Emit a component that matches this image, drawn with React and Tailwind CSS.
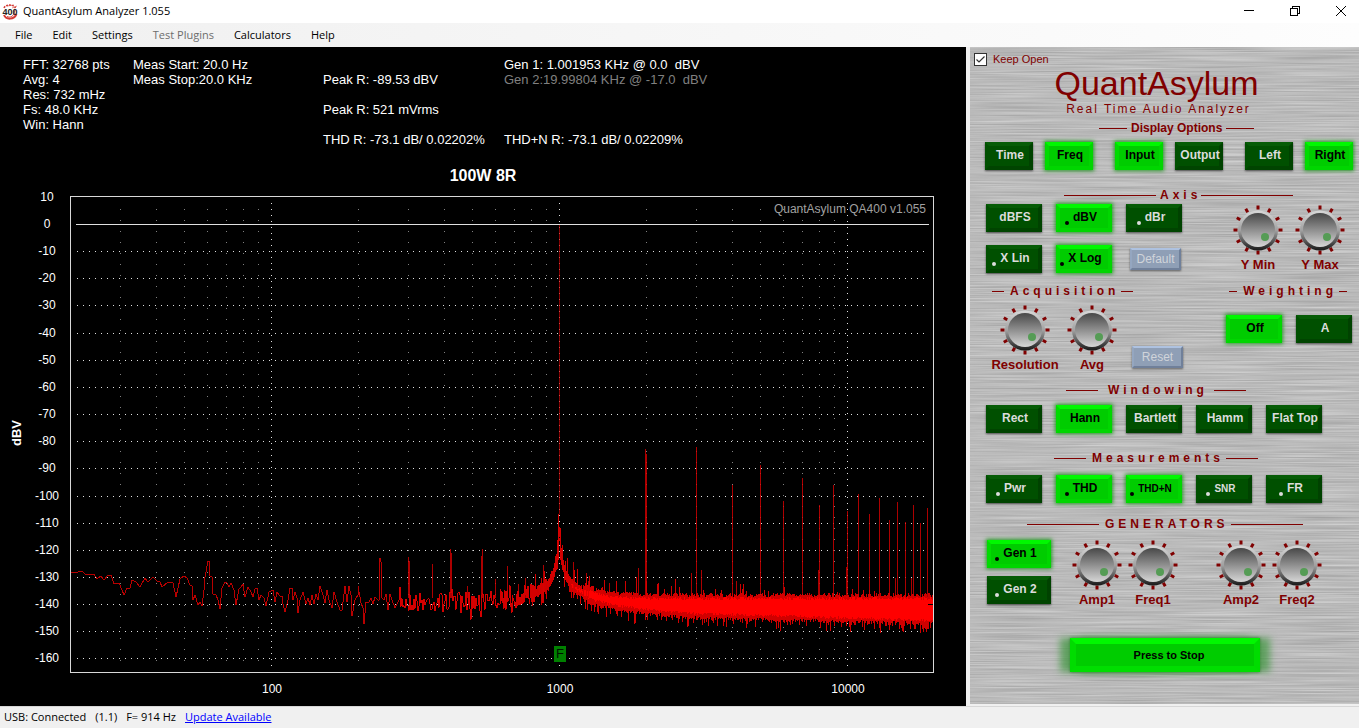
import { useState } from 'react'

const MENU = ['File', 'Edit', 'Settings', 'Test Plugins', 'Calculators', 'Help']

// ---- spectrum plot -------------------------------------------------------

const freqToX = (f) => Math.round(271 + 288 * (Math.log10(f) - 2))
const dbToY = (db) => Math.round(224 - db * 2.715)

const DB_LABELS = Array.from({ length: 18 }, (_, i) => 10 - i * 10)
const MAJOR = [100, 1000, 10000]
const MINOR = [
  30, 40, 50, 60, 70, 80, 90, 200, 300, 400, 500, 600, 700, 800, 900,
  2000, 3000, 4000, 5000, 6000, 7000, 8000, 9000,
]

const LOW_TRACE =
  '71,572 75,573 81,571 83,572 86,575 94,574 97,579 101,576 104,580 108,575 111,575 114,584 119,583 122,590 124,595 127,588 130,588 132,580 136,582 140,587 145,578 148,582 153,577 157,581 160,582 162,587 168,582 173,583 176,597 180,579 184,576 187,578 190,585 192,586 193,600 195,595 198,605 200,602 202,606 204,590 205,577 206,572 208,561 209,561 210,576 212,577 213,594 216,595 218,600 220,609 222,588 225,582 227,583 229,587 231,583 234,590 236,605 239,589 241,587 243,584 245,597 248,587 251,592 253,597 255,589 257,588 259,600 261,595 264,598 266,606 269,592 273,590 275,602 277,592 280,596 282,596 283,604 285,612 288,600 290,588 292,588 293,600 295,592 297,598 298,613 300,600 303,592 306,604 308,598 310,605 312,595 314,604 316,594 318,600 320,586 323,595 325,603 327,590 329,600 332,608 334,592 337,602 340,610 342,610 344,594 345,586 347,602 349,586 351,595 352,616 355,600 358,595 358,586 361,603 363,608 364,624 366,602 369,602 371,598 373,604 375,597 378,600 379,600 380,558 381,562 382,598 384,600 386,594 388,610 390,594 392,600 395,608 397,604 399,600'

// [x, top]
const SPIKES = [
  [408, 557], [409, 561], [432, 564], [450, 549], [451, 553], [467, 586], [482, 549], [481, 556],
  [495, 579], [507, 566], [518, 584], [525, 578], [543, 565], [573, 562], [586, 573], [588, 581],
  [609, 583], [638, 568], [645, 449], [646, 454], [691, 573], [696, 447], [701, 570], [732, 485],
  [736, 581], [760, 465], [783, 501], [802, 478], [818, 570], [819, 505], [833, 485], [846, 567],
  [847, 511], [858, 494], [869, 514], [879, 498], [889, 520], [895, 578], [897, 502], [905, 522],
  [911, 578], [913, 505], [920, 523], [927, 508],
]

function buildNoise() {
  let seed = 7
  const rnd = () => {
    seed = (seed * 16807) % 2147483647
    return seed / 2147483647
  }
  let line = 'M399 600'
  let fringe = ''
  let core = ''
  for (let x = 400; x < 933; x++) {
    const d = Math.abs(x - 559)
    const near = Math.max(0, Math.min(1, (x - 580) / 100))
    const far = Math.max(0, (x - 660) / 273)
    const c = 602 + near * 3 - 26 * Math.exp(-d / 25) - 45 * Math.exp(-d / 3.5)
    if (x < 640) {
      const spread = d < 25 ? 12 : 20
      const steps = x < 500 ? 1 : 2
      for (let k = 0; k < steps; k++) {
        const roll = rnd()
        const jump = roll > 0.93 ? rnd() * 14 : roll < 0.05 ? -rnd() * 12 : 0
        line += `L${x + k * 0.5} ${(c + (rnd() - 0.5) * spread + jump).toFixed(1)}`
      }
    }
    if (x > 530) {
      const h = d < 25 ? 2 : 4 + near * 4
      const rise = rnd() > 0.86 ? rnd() * 16 * (1 - far) : 0
      const dip = rnd() > 0.65 ? rnd() * 10 : 0
      fringe += `M${x}.5 ${Math.round(c - h - rnd() * 4 - rise)}V${Math.round(c + h + 2 + far * 7 + rnd() * 4 + dip)}`
      if (x > 570) {
        core += `M${x}.5 ${Math.round(c - h + rnd() * 3)}V${Math.round(c + h + 1 + far * 8 - rnd() * 3)}`
      }
    }
  }
  return { line, fringe, core }
}

const NOISE = buildNoise()

function Spectrum() {
  return (
    <svg
      viewBox="0 186 966 520"
      className="block h-auto w-full font-['Liberation_Sans',sans-serif]"
      role="img"
      aria-label="Spectrum"
    >
      <g shapeRendering="crispEdges" fill="none">
        {MINOR.map((f) => (
          <path key={f} d={`M${freqToX(f)}.5 209V661`} stroke="#808080" strokeDasharray="1 10" />
        ))}
        {DB_LABELS.slice(2).map((db) => (
          <path key={db} d={`M77 ${dbToY(db)}.5H924`} stroke="#e0e0e0" strokeDasharray="1 5" />
        ))}
        {MAJOR.map((f) => (
          <path key={f} d={`M${freqToX(f)}.5 203V667`} stroke="#e0e0e0" strokeDasharray="1 5" />
        ))}
        <path d="M76 224.5H929" stroke="#e0e0e0" />
        <path d="M70.5 196.5H933.5V672.5H70.5Z" stroke="#d8d8d8" />
      </g>

      <g fill="none" shapeRendering="crispEdges">
        <polyline points={LOW_TRACE} stroke="#b80000" />
        <path d={NOISE.fringe} stroke="#d00000" />
        <path d={NOISE.line} stroke="#d40000" />
        <path d={NOISE.core} stroke="#ff0000" />
        <path d={SPIKES.map(([x, y]) => `M${x}.5 ${y}V598`).join('')} stroke="#d80000" strokeOpacity="0.8" />
        <path d="M559.5 225V514" stroke="#c80000" strokeOpacity="0.65" />
        <path d="M558.5 514V560M560.5 528V560" stroke="#d80000" />
        <path d="M928 604.5H933" stroke="#000" />
      </g>

      <rect x="554" y="646" width="12" height="16" fill="#008000" />
      <text x="560" y="658" textAnchor="middle" fontSize="13" fill="#001000">F</text>

      <text x="926" y="213" textAnchor="end" fontSize="12" fill="#a0a0a0">QuantAsylum QA400 v1.055</text>
      <g fontSize="12" fill="#fff" textAnchor="middle">
        {DB_LABELS.map((db) => (
          <text key={db} x="47" y={dbToY(db) + 4}>{db}</text>
        ))}
        {MAJOR.map((f) => (
          <text key={f} x={freqToX(f) + 1} y="693">{f}</text>
        ))}
      </g>
      <text transform="translate(21 433) rotate(-90)" textAnchor="middle" fontSize="13" fontWeight="bold" fill="#fff">
        dBV
      </text>
    </svg>
  )
}

function Readouts() {
  return (
    <div className="flex h-[90px] whitespace-pre pl-[23px] text-[13px] leading-[15px] text-white">
      <div className="w-[110px]">
        <p>FFT: 32768 pts</p>
        <p>Avg: 4</p>
        <p>Res: 732 mHz</p>
        <p>Fs: 48.0 KHz</p>
        <p>Win: Hann</p>
      </div>
      <div className="w-[190px]">
        <p>Meas Start: 20.0 Hz</p>
        <p>Meas Stop:20.0 KHz</p>
      </div>
      <div className="flex w-[181px] flex-col gap-[15px] pt-[15px]">
        <p>Peak R: -89.53 dBV</p>
        <p>Peak R: 521 mVrms</p>
        <p>THD R: -73.1 dB/ 0.02202%</p>
      </div>
      <div className="flex flex-col justify-between">
        <div>
          <p>Gen 1: 1.001953 KHz @ 0.0  dBV</p>
          <p className="text-[#808080]">Gen 2:19.99804 KHz @ -17.0  dBV</p>
        </div>
        <p>THD+N R: -73.1 dB/ 0.02209%</p>
      </div>
    </div>
  )
}

// ---- control panel -------------------------------------------------------

function Heading({ children, line, className = '', tracked = true }) {
  return (
    <h2 className={`flex h-[18px] items-center text-[12px] font-bold whitespace-nowrap text-[#800000] ${className}`}>
      <span className={`h-px bg-[#800000] ${line}`} />
      <span className={tracked ? '-mr-1 tracking-[4px]' : ''}>{children}</span>
      <span className={`h-px bg-[#800000] ${line}`} />
    </h2>
  )
}

function PanelButton({ label, on, dot, onClick, width = 'w-14', text = 'text-[12px]' }) {
  const look = on
    ? 'border-t-[#00f800] border-r-[#00d600] border-b-[#00d600] border-l-[#00dc00] bg-[#00cc00] text-black shadow-[0_0_4px_1px_rgba(0,140,0,0.8)]'
    : 'border-t-[#065c06] border-r-[#004200] border-b-[#004400] border-l-[#005000] bg-[#005000] text-[#dcdcdc] shadow-[0_1px_2px_rgba(0,0,0,0.6)]'
  return (
    <button
      type="button"
      aria-pressed={on}
      onClick={onClick}
      className={`flex h-7 shrink-0 items-center justify-center border-4 pb-[2px] font-bold whitespace-nowrap ${width} ${text} ${look} ${
        dot ? 'gap-1 pr-[6px]' : 'pl-[2px]'
      }`}
    >
      {dot && <span className="mb-px size-1 self-end rounded-full bg-current" />}
      {label}
    </button>
  )
}

function FlatButton({ children, className = '' }) {
  return (
    <button
      type="button"
      className={`h-[22px] w-[51px] border-2 border-t-[#aec2e0] border-r-[#70809a] border-b-[#70809a] border-l-[#94a6c0] bg-[#8f9fb6] text-[12px] leading-none text-[#d0d4da] shadow-[0_1px_2px_rgba(0,0,0,0.5)] ${className}`}
    >
      {children}
    </button>
  )
}

const TICKS = [0, 30, 60, 90, 120, 150, 180, 210, 240, 270, 300, 330]

function Knob({ label, width = 'w-14' }) {
  return (
    <label className={`relative flex flex-col items-center text-[13px] leading-[18px] font-bold whitespace-nowrap text-[#800000] ${width}`}>
      <input type="range" className="sr-only" />
      <svg viewBox="-26 -26 52 52" className="size-[52px]" aria-hidden="true">
        {TICKS.map((a) => (
          <rect key={a} x="-1.5" y="-24.5" width="3" height="4" fill="#800000" transform={`rotate(${a})`} />
        ))}
        <circle r="20" cy="0.5" fill="url(#rim)" />
        <circle r="17" fill="url(#face)" />
        <circle cx="7" cy="7" r="4" fill="#559c55" />
      </svg>
      {label}
    </label>
  )
}

function BrushedMetal() {
  return (
    <svg className="absolute inset-0 size-full" aria-hidden="true">
      <defs>
        <filter id="brushed" x="0" y="0" width="100%" height="100%" colorInterpolationFilters="sRGB">
          <feTurbulence type="fractalNoise" baseFrequency="0.01 0.7" numOctaves="2" seed="4" />
          <feColorMatrix values="0.22 0 0 0 0.62  0.22 0 0 0 0.62  0.22 0 0 0 0.62  0 0 0 0 1" />
        </filter>
        <linearGradient id="rim" x1="0" y1="0" x2="0" y2="1">
          <stop offset="0" stopColor="#d8d8d8" />
          <stop offset="0.5" stopColor="#a0a0a0" />
          <stop offset="0.85" stopColor="#404040" />
          <stop offset="1" stopColor="#181818" />
        </linearGradient>
        <linearGradient id="face" x1="0" y1="0" x2="0" y2="1">
          <stop offset="0" stopColor="#484848" />
          <stop offset="1" stopColor="#d6d6d6" />
        </linearGradient>
      </defs>
      <rect width="100%" height="100%" fill="#b8b8b8" filter="url(#brushed)" />
    </svg>
  )
}

function ControlPanel() {
  const [display, setDisplay] = useState({ domain: 'Freq', io: 'Input', channel: 'Right' })
  const [unit, setUnit] = useState('dBV')
  const [scale, setScale] = useState('X Log')
  const [weighting, setWeighting] = useState('Off')
  const [win, setWin] = useState('Hann')
  const [active, setActive] = useState(['THD', 'THD+N', 'Gen 1'])
  const [running, setRunning] = useState(true)

  const toggle = (name) =>
    setActive((prev) => (prev.includes(name) ? prev.filter((n) => n !== name) : [...prev, name]))

  const pairs = [
    ['domain', ['Time', 'Freq']],
    ['io', ['Input', 'Output']],
    ['channel', ['Left', 'Right']],
  ]

  return (
    <aside className="relative mb-[2px] ml-1 w-[389px] shrink-0 overflow-hidden bg-[#b8b8b8]">
      <BrushedMetal />
      <div className="relative pt-1">
        <label className="flex h-4 items-center gap-[6px] pl-1 text-[11px] text-[#800000]">
          <input
            type="checkbox"
            defaultChecked
            className="peer size-[13px] appearance-none border border-[#333] bg-white"
          />
          <svg viewBox="0 0 13 13" className="pointer-events-none -ml-[19px] hidden size-[13px] peer-checked:block" aria-hidden="true">
            <path d="M2.5 6.5L5 9L10.5 3.5" fill="none" stroke="#333" strokeWidth="1.2" />
          </svg>
          Keep Open
        </label>
        <h1 className="pr-4 text-center text-[34px] leading-8 text-[#800000]">QuantAsylum</h1>
        <p className="pr-3 text-center text-[12px] leading-5 tracking-[2px] text-[#800000]">
          Real Time Audio Analyzer
        </p>

        <Heading line="w-7" tracked={false} className="ml-[129px] gap-1">Display Options</Heading>
        <div className="mt-[5px] flex gap-[22px] pl-[15px]">
          {pairs.map(([key, names]) => (
            <div key={key} className="flex gap-3">
              {names.map((name) => (
                <PanelButton
                  key={name}
                  label={name}
                  width="w-12"
                  on={display[key] === name}
                  onClick={() => setDisplay({ ...display, [key]: name })}
                />
              ))}
            </div>
          ))}
        </div>

        <Heading line="w-[92px]" className="mt-4 ml-[94px] gap-1">Axis</Heading>
        <div className="flex pl-4">
          <div className="flex flex-col gap-[13px]">
            <div className="flex gap-[14px]">
              {['dBFS', 'dBV', 'dBr'].map((name) => (
                <PanelButton key={name} label={name} dot={name !== 'dBFS'} on={unit === name} onClick={() => setUnit(name)} />
              ))}
            </div>
            <div className="flex items-center gap-[14px]">
              {['X Lin', 'X Log'].map((name) => (
                <PanelButton key={name} label={name} dot on={scale === name} onClick={() => setScale(name)} />
              ))}
              <FlatButton className="ml-1">Default</FlatButton>
            </div>
          </div>
          <div className="ml-12 flex gap-[6px]">
            <Knob label="Y Min" />
            <Knob label="Y Max" />
          </div>
        </div>

        <div className="mt-2 flex justify-between pr-3 pl-[22px]">
          <Heading line="w-3" className="gap-[6px]">Acquisition</Heading>
          <Heading line="w-2" className="gap-[6px]">Weighting</Heading>
        </div>
        <div className="mt-1 flex pl-4">
          <Knob label="Resolution" width="w-[78px]" />
          <Knob label="Avg" />
          <FlatButton className="mt-[42px] ml-3">Reset</FlatButton>
          <div className="mt-[11px] ml-[43px] flex gap-[14px]">
            {['Off', 'A'].map((name) => (
              <PanelButton key={name} label={name} on={weighting === name} onClick={() => setWeighting(name)} />
            ))}
          </div>
        </div>

        <Heading line="w-8" className="mt-[7px] ml-24 gap-[10px]">Windowing</Heading>
        <div className="mt-[6px] flex gap-[14px] pl-4">
          {['Rect', 'Hann', 'Bartlett', 'Hamm', 'Flat Top'].map((name) => (
            <PanelButton key={name} label={name} on={win === name} onClick={() => setWin(name)} />
          ))}
        </div>

        <Heading line="w-8" className="mt-4 ml-[84px] gap-[6px]">Measurements</Heading>
        <div className="mt-2 flex gap-[14px] pl-4">
          {['Pwr', 'THD', 'THD+N', 'SNR', 'FR'].map((name) => (
            <PanelButton
              key={name}
              label={name}
              dot
              text={name === 'THD+N' || name === 'SNR' ? 'text-[10px]' : 'text-[12px]'}
              on={active.includes(name)}
              onClick={() => toggle(name)}
            />
          ))}
        </div>

        <Heading line="w-[72px]" className="mt-3 ml-[57px] gap-[6px]">GENERATORS</Heading>
        <div className="mt-[6px] flex pl-[17px]">
          <div className="mt-px mr-[18px] flex flex-col gap-2">
            {['Gen 1', 'Gen 2'].map((name) => (
              <PanelButton key={name} label={name} dot width="w-16" on={active.includes(name)} onClick={() => toggle(name)} />
            ))}
          </div>
          <Knob label="Amp1" />
          <Knob label="Freq1" />
          <div className="ml-8 flex">
            <Knob label="Amp2" />
            <Knob label="Freq2" />
          </div>
        </div>

        <button
          type="button"
          onClick={() => setRunning(!running)}
          className="mt-[29px] ml-[100px] block h-[34px] w-[190px] border-[6px] border-t-[#00f800] border-r-[#00dc00] border-b-[#00de00] border-l-[#00dc00] bg-[#00cc00] pl-2 text-[11px] leading-none font-bold text-black shadow-[-10px_0_7px_rgba(60,150,60,0.7),10px_0_7px_rgba(60,150,60,0.7),0_0_3px_rgba(0,70,0,0.8)]"
        >
          {running ? 'Press to Stop' : 'Press to Start'}
        </button>
      </div>
    </aside>
  )
}

// ---- window --------------------------------------------------------------

function TitleBar() {
  return (
    <header className="flex h-[23px] items-center bg-white pr-[2px] pl-[2px]">
      <svg viewBox="0 0 16 16" className="size-4" aria-hidden="true">
        <g fill="none" stroke="#d43a34">
          <path d="M2 4C4 0 11 0 13.500 4" strokeWidth="1.500" strokeDasharray="2 1" />
          <path d="M5 2L12 1M10 4L15 2" strokeWidth="1" opacity="0.6" />
          <path d="M2 11C4 16 12 16 14.500 10" strokeWidth="2" />
          <path d="M5 12.500C8 14 12 13 13 6" strokeWidth="1" />
        </g>
        <text x="8" y="11" textAnchor="middle" fontSize="9" fontWeight="bold" fill="#222" fontFamily="Liberation Sans, sans-serif">
          400
        </text>
      </svg>
      <span className="ml-[5px] text-[11px]">QuantAsylum Analyzer 1.055</span>
      <div className="ml-auto flex gap-[14px]">
        <button type="button" aria-label="Minimize" className="flex w-8 justify-center">
          <svg viewBox="0 0 12 12" className="size-3" fill="none" stroke="#000" shapeRendering="crispEdges">
            <path d="M1 4.500H11" />
          </svg>
        </button>
        <button type="button" aria-label="Restore" className="flex w-8 justify-center">
          <svg viewBox="0 0 12 12" className="size-3" fill="none" stroke="#000" shapeRendering="crispEdges">
            <path d="M1.500 2.500H8.500V9.500H1.500ZM3.500 2V0.500H10.500V7.500H9" />
          </svg>
        </button>
        <button type="button" aria-label="Close" className="flex w-8 justify-center">
          <svg viewBox="0 0 12 12" className="size-3" fill="none" stroke="#000">
            <path d="M1 0L11 10M11 0L1 10" />
          </svg>
        </button>
      </div>
    </header>
  )
}

export default function App() {
  return (
    <div className="flex min-h-screen flex-col bg-[#f0f0f0] font-['Open_Sans','Noto_Sans',sans-serif] text-black">
      <TitleBar />
      <nav className="flex h-6 items-center gap-5 bg-linear-to-r from-[#f0f0f0] to-[#fdfdfd] pl-[15px] text-[11px]">
        {MENU.map((item) => (
          <button key={item} type="button" disabled={item === 'Test Plugins'} className="disabled:text-[#6d6d6d]">
            {item}
          </button>
        ))}
      </nav>
      <main className="flex flex-1 font-['Liberation_Sans',Arial,sans-serif]">
        <section className="min-w-0 flex-1 bg-black pt-[10px]">
          <Readouts />
          <h2 className="pt-[19px] text-center text-[16px] leading-5 font-bold text-white">100W 8R</h2>
          <Spectrum />
        </section>
        <ControlPanel />
      </main>
      <footer className="flex h-[22px] items-center gap-[9px] border-t border-[#d7d7d7] pl-1 text-[11px]">
        <span>USB: Connected</span>
        <span>(1.1)</span>
        <span>F= 914 Hz</span>
        <a href="#update" className="text-[#0000ff] underline">Update Available</a>
      </footer>
    </div>
  )
}
